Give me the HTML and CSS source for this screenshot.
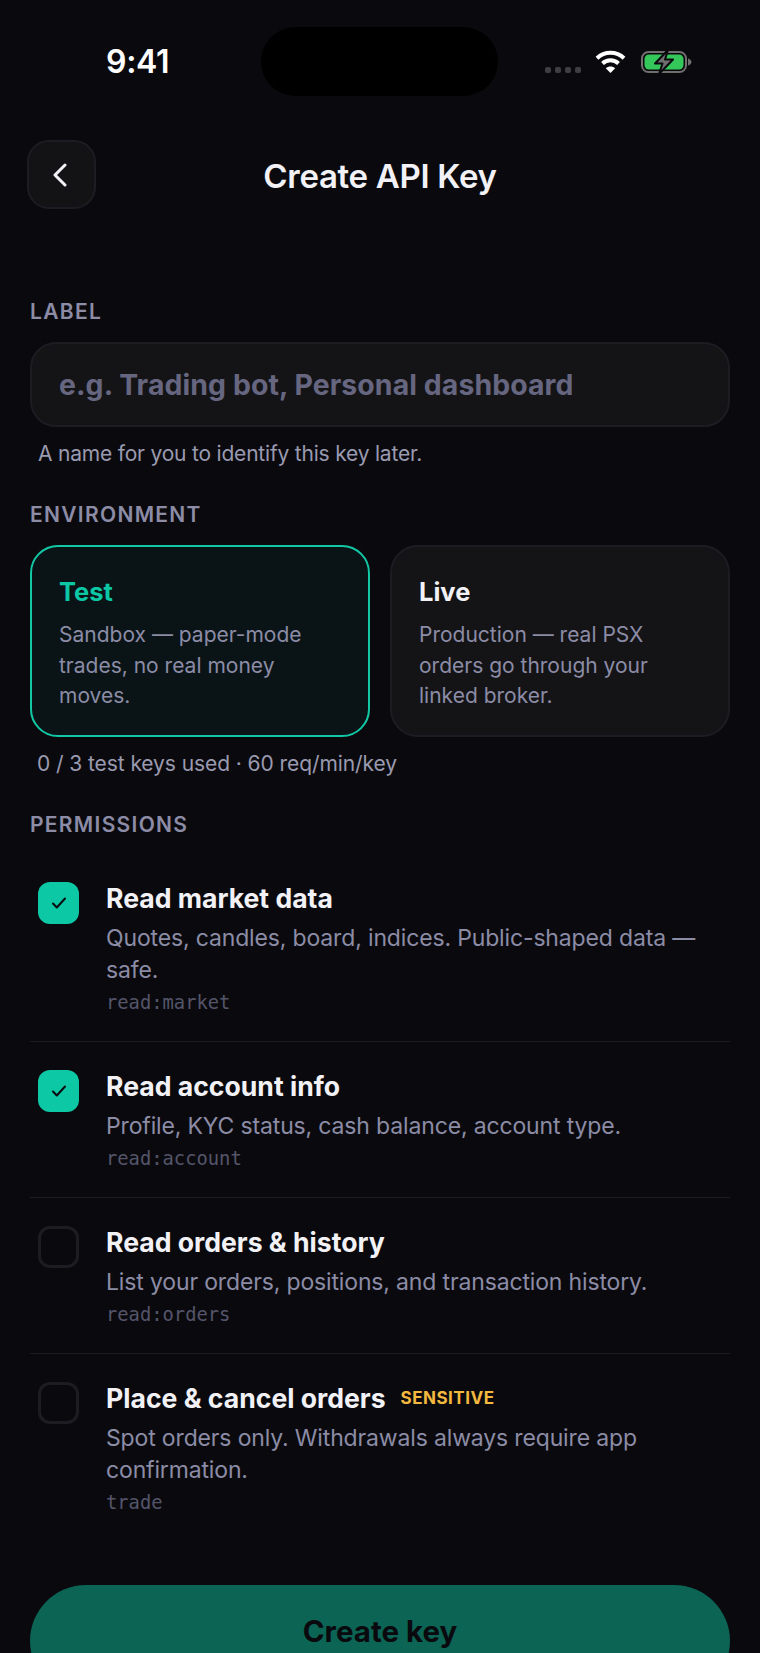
FILE: index.html
```html
<!DOCTYPE html>
<html lang="en">
<head>
<meta charset="utf-8">
<title>Create API Key</title>
<link rel="stylesheet" href="styles.css">
</head>
<body>
<main class="screen">
  <div class="status">
    <span class="time">9:41</span>
    <span class="island"></span>
    <span class="status-icons">
      <span class="dots"><i></i><i></i><i></i><i></i></span>
      <svg class="wifi" width="31" height="23" viewBox="0 0 31 23" fill="none" stroke="#fff" stroke-width="4"><path d="M2 8.2C9.500 1 21.500 1 29 8.200"/><path d="M7.500 13.500C12 9.200 19 9.200 23.500 13.500"/><path d="M15.500 23L10.800 18.300C13.400 15.900 17.600 15.900 20.200 18.300Z" fill="#fff" stroke="none"/></svg>
      <svg class="battery" width="51" height="25" viewBox="0 0 51 25"><rect x="1" y="3" width="44" height="20" rx="6.500" fill="none" stroke="#6f6f6f" stroke-width="2"/><rect x="3.500" y="5.500" width="39" height="15" rx="4.500" fill="#34c759"/><path d="M47 9.500c2 .5 3.500 2 3.500 3.500s-1.500 3-3.500 3.500Z" fill="#6f6f6f"/><path d="M27 1L14 14.500h7.500L18 25 32 10.500h-8Z" fill="#6f6f6f" stroke="#0a0a0e" stroke-width="2" stroke-linejoin="round"/></svg>
    </span>
  </div>

  <header class="header">
    <button class="back" aria-label="Back">
      <svg class="chevron" width="16" height="24" viewBox="0 0 16 24" fill="none" stroke="#f2f2f6" stroke-width="3" stroke-linecap="round" stroke-linejoin="round"><path d="M13 2L3 12l10 10"/></svg>
    </button>
    <h1 class="title">Create API Key</h1>
  </header>

  <section class="form">
    <div class="section-label label-first">LABEL</div>
    <div class="input">e.g. Trading bot, Personal dashboard</div>
    <p class="help">A name for you to identify this key later.</p>

    <div class="section-label">ENVIRONMENT</div>
    <div class="cards">
      <div class="card card-active">
        <div class="card-title">Test</div>
        <p class="card-text">Sandbox — paper-mode trades, no real money moves.</p>
      </div>
      <div class="card">
        <div class="card-title">Live</div>
        <p class="card-text">Production — real PSX orders go through your linked broker.</p>
      </div>
    </div>
    <p class="help help-quota">0 / 3 test keys used · 60 req/min/key</p>

    <div class="section-label">PERMISSIONS</div>
    <ul class="perms">
      <li class="perm">
        <span class="box box-on"><svg width="16" height="14" viewBox="0 0 16 14" fill="none" stroke="#0a0a0e" stroke-width="2" stroke-linecap="round" stroke-linejoin="round"><path d="M2 7.500l3.800 4L14 2.500"/></svg></span>
        <div class="perm-body">
          <div class="perm-title">Read market data</div>
          <p class="perm-text">Quotes, candles, board, indices. Public-shaped data — safe.</p>
          <code class="scope">read:market</code>
        </div>
      </li>
      <li class="perm">
        <span class="box box-on"><svg width="16" height="14" viewBox="0 0 16 14" fill="none" stroke="#0a0a0e" stroke-width="2" stroke-linecap="round" stroke-linejoin="round"><path d="M2 7.500l3.800 4L14 2.500"/></svg></span>
        <div class="perm-body">
          <div class="perm-title">Read account info</div>
          <p class="perm-text">Profile, KYC status, cash balance, account type.</p>
          <code class="scope">read:account</code>
        </div>
      </li>
      <li class="perm">
        <span class="box"></span>
        <div class="perm-body">
          <div class="perm-title">Read orders &amp; history</div>
          <p class="perm-text">List your orders, positions, and transaction history.</p>
          <code class="scope">read:orders</code>
        </div>
      </li>
      <li class="perm">
        <span class="box"></span>
        <div class="perm-body">
          <div class="perm-title">Place &amp; cancel orders <span class="tag">SENSITIVE</span></div>
          <p class="perm-text">Spot orders only. Withdrawals always require app confirmation.</p>
          <code class="scope">trade</code>
        </div>
      </li>
    </ul>
    <button class="submit">Create key</button>
  </section>
</main>
</body>
</html>
```
FILE: styles.css
```css
* { box-sizing: border-box; }
html, body { margin: 0; padding: 0; background: #0a0a0e; }
body { font-family: "Inter", "Liberation Sans", sans-serif; color: #f2f2f6; }
.screen { width: 760px; height: 1653px; overflow: hidden; display: flex; flex-direction: column; background: #0a0a0e; }

.status { height: 96px; padding-top: 27px; display: grid; grid-template-columns: 261px 237px 1fr; align-items: start; flex: none; }
.time { padding-left: 106px; margin-top: 17px; font: 600 32px/36px "Inter", sans-serif; letter-spacing: -0.3px; color: #fff; }
.island { height: 69px; border-radius: 35px; background: #000; }
.status-icons { display: flex; align-items: flex-start; padding: 22px 0 0 47px; }
.dots { display: flex; gap: 4px; margin-top: 18px; }
.dots i { width: 6px; height: 6px; border-radius: 2px; background: #3f3f42; }
.wifi { margin-left: 14px; margin-top: 1px; }
.battery { margin-left: 15px; }

.header { flex: none; margin-top: 44px; padding: 0 27px; display: grid; grid-template-columns: 69px 1fr 69px; align-items: center; }
.back { width: 69px; height: 69px; padding: 0; border: 2px solid #1c1c22; border-radius: 22px; background: #131316; display: flex; align-items: center; justify-content: center; }
.chevron { margin-left: -3px; }
.title { grid-column: 2; margin: 3px 0 0; text-align: center; font-size: 33px; line-height: 40px; font-weight: 600; letter-spacing: -0.3px; color: #f2f2f6; }

.form { padding: 0 30px; }
.section-label { margin-top: 35px; height: 22px; font-size: 21px; line-height: 24px; font-weight: 600; letter-spacing: 1.3px; color: #8c8ca6; }
.label-first { margin-top: 91px; }
.input { margin-top: 20px; height: 85px; padding: 0 27px; display: flex; align-items: center; border: 2px solid #1c1c22; border-radius: 26px; background: #141417; font-size: 28.400px; font-weight: 700; letter-spacing: 0.1px; color: #666680; }
.help { margin: 13px 0 0 8px; font-size: 21px; line-height: 28px; letter-spacing: -0.2px; color: #9a9ab0; }
.help-quota { letter-spacing: -0.08px; margin-left: 7px; }

.cards { margin-top: 20px; display: grid; grid-template-columns: 340px 340px; gap: 20px; }
.card { height: 192px; padding: 25px 27px; border: 2px solid #1c1c22; border-radius: 28px; background: #141417; }
.card-active { border-color: #12c8a4; background: #0a1417; }
.card-title { font-size: 25.500px; line-height: 40px; font-weight: 700; color: #f2f2f6; }
.card-active .card-title { color: #0cc8a5; }
.card-text { margin: 8px 0 0; font-size: 21px; line-height: 30.500px; color: #8c8ca6; }

.perms { list-style: none; margin: 19px 0 0; padding: 0; }
.perm { display: flex; gap: 27px; padding: 28px 0 26px 8px; border-top: 1px solid #1c1c22; }
.perm:first-child { border-top: 0; }
.box { flex: none; width: 41px; height: 42px; border: 3px solid #1c1c22; border-radius: 12px; display: flex; align-items: center; justify-content: center; }
.box-on { border: 0; background: #0cc8a5; }
.perm-body { flex: 1; min-width: 0; }
.perm-title { display: flex; align-items: center; gap: 15px; font-size: 26.600px; line-height: 34px; font-weight: 700; color: #f2f2f6; margin-top: -1px; }
.perm-text { margin: 7px 0 0; font-size: 23px; line-height: 32px; letter-spacing: -0.15px; color: #8c8ca6; }
.scope { display: block; margin-top: 5px; font-family: "DejaVu Sans Mono", monospace; font-size: 18.800px; line-height: 24px; color: #55556a; }
.tag { font-size: 17px; line-height: 24px; font-weight: 700; letter-spacing: 0.5px; color: #f5b93f; }

.submit { display: block; width: 700px; height: 112px; margin: 44px 0 0; border: 0; border-radius: 56px; background: #0c6454; font-family: inherit; font-size: 29.500px; font-weight: 700; color: #0a0a0e; padding: 0 0 20px; }
```
